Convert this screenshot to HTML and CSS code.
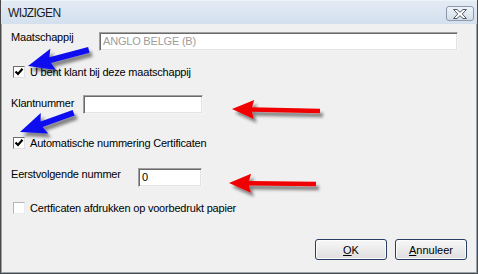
FILE: index.html
```html
<!DOCTYPE html>
<html>
<head>
<meta charset="utf-8">
<link rel="stylesheet" href="styles.css">
</head>
<body>
<div class="window">
  <div class="titlebar">
    <span class="title">WIJZIGEN</span>
    <span class="close">
      <svg width="14" height="10" viewBox="0 0 14 10"><polygon points="0.5,0.5 4,0.5 7,3.3 10,0.5 13.5,0.5 9.2,5 13.5,9.5 10,9.5 7,6.7 4,9.5 0.5,9.5 4.8,5" fill="#fff" stroke="#4f5864" stroke-width="1" stroke-linejoin="round"/></svg>
    </span>
  </div>
  <div class="content">
    <div class="field field-company">
      <span class="label">Maatschappij</span>
      <span class="textbox disabled">ANGLO BELGE (B)</span>
    </div>
    <div class="check check-1">
      <span class="box"><svg width="10" height="10" viewBox="0 0 10 10"><path d="M1.5 4.5 L4 7 L8.5 1.8" fill="none" stroke="#000" stroke-width="2.2"/></svg></span>
      <span>U bent klant bij deze maatschappij</span>
    </div>
    <div class="field field-client">
      <span class="label">Klantnummer</span>
      <span class="textbox"></span>
    </div>
    <div class="check check-2">
      <span class="box"><svg width="10" height="10" viewBox="0 0 10 10"><path d="M1.5 4.5 L4 7 L8.5 1.8" fill="none" stroke="#000" stroke-width="2.2"/></svg></span>
      <span>Automatische nummering Certificaten</span>
    </div>
    <div class="field field-next">
      <span class="label">Eerstvolgende nummer</span>
      <span class="textbox">0</span>
    </div>
    <div class="check check-3">
      <span class="box light"></span>
      <span>Certficaten afdrukken op voorbedrukt papier</span>
    </div>
    <div class="buttons">
      <span class="button"><u>O</u>K</span>
      <span class="button"><u>A</u>nnuleer</span>
    </div>
  </div>
  <svg class="arrows" width="478" height="274" viewBox="0 0 478 274">
    <defs>
      <filter id="sh" x="-20%" y="-50%" width="140%" height="200%">
        <feDropShadow dx="3" dy="4" stdDeviation="1.6" flood-color="#000" flood-opacity="0.45"/>
      </filter>
    </defs>
    <g filter="url(#sh)">
      <polygon transform="translate(27,66) rotate(-14.9)" points="0,0 26,-11 23,-3 63,-3 63,3 23,3 26,11" fill="#1010f0"/>
      <polygon transform="translate(19,132) rotate(-19.7)" points="0,0 26,-11 23,-3 57,-3 57,3 23,3 26,11" fill="#1010f0"/>
      <polygon transform="translate(231,109) rotate(1.3)" points="0,0 22,-9.5 20,-2.2 88,-2.2 88,2.2 20,2.2 22,9.5" fill="#f00000"/>
      <polygon transform="translate(228,183) rotate(0.66)" points="0,0 22,-9.5 20,-2.2 87,-2.2 87,2.2 20,2.2 22,9.5" fill="#f00000"/>
    </g>
  </svg>
</div>
</body>
</html>
```
FILE: styles.css
```css
html, body {
  margin: 0;
  padding: 0;
}
body {
  font-family: "Liberation Sans", Arial, sans-serif;
  font-size: 11px;
  letter-spacing: -0.2px;
  color: #000;
}
.window {
  position: relative;
  width: 478px;
  height: 274px;
  box-sizing: border-box;
  background: #f0f0f0;
  border: 1px solid #4a4a4a;
  border-top: none;
  box-shadow: inset 1px 0 0 #9aa3ad, inset -1px 0 0 #9aa3ad, inset 0 -1px 0 #9aa3ad;
  display: flex;
  flex-direction: column;
  overflow: hidden;
}
.titlebar {
  height: 24px;
  flex: none;
  display: flex;
  align-items: center;
  justify-content: space-between;
  padding: 0 3px 0 7px;
  background: linear-gradient(#e3ebf5, #d4e0ee);
  border-top: 1px solid #eef3f9;
  box-sizing: border-box;
}
.title {
  font-size: 12px;
  letter-spacing: -0.6px;
  color: #1c1c1c;
  margin-top: 1px;
}
.close {
  width: 28px;
  height: 15px;
  box-sizing: border-box;
  border: 1px solid #8c99aa;
  border-radius: 3px;
  background: linear-gradient(#eef3f8, #d3dde9);
  display: flex;
  align-items: center;
  justify-content: center;
  margin-top: 2px;
}
.close svg { display: block; }
.content {
  display: flex;
  flex-direction: column;
  padding: 8px 10px 0 10px;
}
.field {
  display: flex;
  align-items: flex-start;
  height: 19px;
}
.label {
  flex: none;
  line-height: 13px;
}
.field-company .label { width: 88px; margin-top: -1px; }
.field-client .label { width: 72px; margin-top: 2px; }
.field-next .label { width: 127px; margin-top: 0; }
.textbox {
  box-sizing: border-box;
  height: 19px;
  background: #fff;
  border: 1px solid;
  border-color: #a0a0a0 #f4f4f4 #f4f4f4 #a0a0a0;
  box-shadow: inset 1px 1px 0 #6a6a6a, inset -1px -1px 0 #e3e3e3;
  padding: 0 3px;
  line-height: 17px;
}
.textbox.disabled { color: #9d9d9d; }
.field-company .textbox { width: 359px; }
.field-client .textbox { width: 120px; }
.field-next .textbox { width: 64px; }
.field-client { margin-top: 17px; }
.field-next { margin-top: 19px; }
.check {
  display: flex;
  align-items: center;
  gap: 5px;
  height: 12px;
  padding-left: 2px;
}
.check-1 { margin-top: 15px; }
.check-2 { margin-top: 23px; }
.check-3 { margin-top: 15px; }
.box {
  width: 12px;
  height: 12px;
  box-sizing: border-box;
  flex: none;
  background: #fff;
  border: 1px solid;
  border-color: #6e6e6e #e2e2e2 #e2e2e2 #6e6e6e;
  display: flex;
  align-items: center;
  justify-content: center;
}
.box.light {
  border-color: #b5b5b5 #ececec #ececec #b5b5b5;
}
.box svg { display: block; }
.buttons {
  display: flex;
  justify-content: flex-end;
  gap: 8px;
  margin-top: 25px;
}
.button {
  width: 72px;
  height: 21px;
  box-sizing: border-box;
  border: 1px solid #283f63;
  border-radius: 3px;
  background: linear-gradient(#f7f7f7, #ebebeb 50%, #dedede);
  box-shadow: inset 0 0 0 1px #fcfcfc;
  display: flex;
  align-items: center;
  justify-content: center;
  letter-spacing: 0;
}
.arrows {
  position: absolute;
  left: 0;
  top: 0;
  pointer-events: none;
}
```
